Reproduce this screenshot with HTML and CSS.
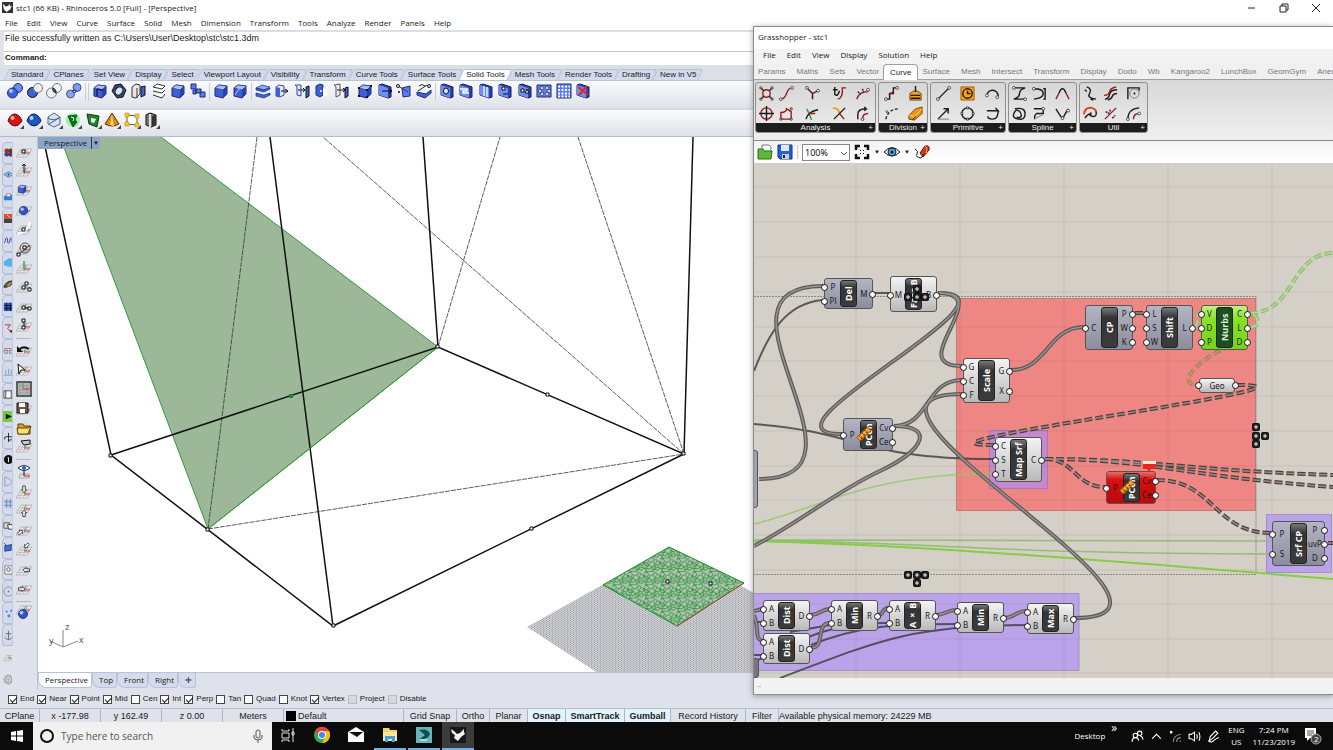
FILE: index.html
```html
<!DOCTYPE html>
<html lang="en">
<head>
    <meta charset="utf-8">
    <title>stc1 - Rhinoceros 5.0</title>
    <link rel="stylesheet" href="styles.css">
</head>
<body>
    <svg class="defs" aria-hidden="true">
        <symbol id="box" viewBox="0 0 16 16"><path d="M2 5l4-3 8 1v8l-4 4-8-2z" fill="#3d5fd0" stroke="#1d2d78"/><path d="M2 5l4-3 8 1-4 4z" fill="#a9c0ff" stroke="#1d2d78" stroke-width=".6"/><path d="M10 7v8l4-4V3z" fill="#2743a8"/></symbol>
        <symbol id="slab" viewBox="0 0 16 16"><path d="M2 2l3-1 9 3v10l-3 1-9-3z" fill="#2744b0" stroke="#14205c"/><path d="M2 2l9 3v10l-9-3z" fill="#6d8df2"/></symbol>
        <symbol id="plane" viewBox="0 0 16 16"><path d="M5 5h11l-5 8H0z" fill="#eceef0" stroke="#a4a6aa" stroke-width=".7"/><path d="M3.500 8H14M2 10.500h11M8 5l-5 8M12 5l-5 8" stroke="#a4a6aa" stroke-width=".6"/><path d="M8 9h6" stroke="#d33c32"/><path d="M8 9l2-4" stroke="#44a04a"/></symbol>
        <symbol id="ball" viewBox="0 0 16 16"><circle cx="8" cy="8" r="6" fill="#2f55c8" stroke="#14256e"/><circle cx="6" cy="6" r="2.500" fill="#a9c4ff"/></symbol>
        <symbol id="hand" viewBox="0 0 16 16"><path d="M8 2l4 4h-2v6H6V6H4z" fill="#fff" stroke="#111" stroke-width="1.200"/></symbol>
        <symbol id="nodekey" viewBox="0 0 8 8"><rect x=".5" y=".5" width="7" height="7" rx="1" fill="#222" stroke="#111"/><path d="M4 2v4M2 4h4" stroke="#eee"/></symbol>
        <symbol id="pipe" viewBox="0 0 18 18"><path d="M1 13L13 1l4 4L5 17z" fill="#f59a1c" stroke="#8a4a08"/><path d="M4 11l3 3M7 8l3 3M10 5l3 3" stroke="#7c3500" stroke-width="1.500"/><path d="M4 13L13 4" stroke="#ffe08a"/></symbol>
    </svg>

    <header class="titlebar">
        <svg class="logo" viewBox="0 0 12 12"><rect width="12" height="12" fill="#333"/><path d="M1 2l3 3 3-1 1-2 1 3 2-1-2 4-4 3-3-3z" fill="#fff"/></svg>
        <span>stc1 (66 KB) - Rhinoceros 5.0 [Full] - [Perspective]</span>
        <div class="window-buttons">
            <button aria-label="Minimize"><svg viewBox="0 0 10 10"><path d="M1 5h7"/></svg></button>
            <button aria-label="Restore"><svg viewBox="0 0 10 10"><path d="M1 3h6v6H1zM3 3V1h6v6H7"/></svg></button>
            <button aria-label="Close"><svg viewBox="0 0 10 10"><path d="M1 1l8 8M9 1l-8 8"/></svg></button>
        </div>
    </header>
    <nav class="menubar">
        <button>File</button><button>Edit</button><button>View</button><button>Curve</button><button>Surface</button><button>Solid</button><button>Mesh</button><button>Dimension</button><button>Transform</button><button>Tools</button><button>Analyze</button><button>Render</button><button>Panels</button><button>Help</button>
    </nav>
    <section class="command">
        <p>File successfully written as C:\Users\User\Desktop\stc\stc1.3dm</p>
        <div class="prompt"><label for="cmd">Command:</label><input id="cmd" type="text"></div>
    </section>
    <nav class="tooltabs">
        <button>Standard</button><button>CPlanes</button><button>Set View</button><button>Display</button><button>Select</button><button>Viewport Layout</button><button>Visibility</button><button>Transform</button><button>Curve Tools</button><button>Surface Tools</button><button class="active">Solid Tools</button><button>Mesh Tools</button><button>Render Tools</button><button>Drafting</button><button>New in V5</button>
    </nav>

    <div class="toolbar">
        <div class="set w4">
            <button aria-label="Boolean union"><svg viewBox="0 0 16 16"><circle cx="11" cy="5" r="4.500" fill="#6b8cf0" stroke="#1d2d78"/><circle cx="5.500" cy="10" r="5" fill="#3d62d8" stroke="#1d2d78"/><circle cx="4" cy="8" r="2" fill="#a9c0ff"/></svg></button>
            <button aria-label="Boolean difference"><svg viewBox="0 0 16 16"><circle cx="5.500" cy="9.500" r="5" fill="#3d62d8" stroke="#111"/><circle cx="11" cy="5" r="4.500" fill="#eef0f4" stroke="#777"/></svg></button>
            <button aria-label="Boolean intersection"><svg viewBox="0 0 16 16" fill="none" stroke="#777"><circle cx="5.500" cy="10" r="5"/><circle cx="11" cy="5" r="4.500"/><path d="M7 5q3 1 3 5-4-1-3-5z" fill="#3d62d8" stroke="#222"/></svg></button>
            <button aria-label="Boolean split"><svg viewBox="0 0 16 16"><circle cx="11" cy="4.500" r="4" fill="#7d9bf5" stroke="#33479c"/><circle cx="4.500" cy="11" r="4" fill="#86a2f7" stroke="#555"/><path d="M6 8l4-1-1 3z" fill="#fff" stroke="#1d2d78"/></svg></button>
        </div>
        <i></i><i></i>
        <div class="set w6">
            <button aria-label="Shell"><svg viewBox="0 0 16 16"><use href="#box"/><path d="M5 6v7M5 6l6 1" stroke="#14205c" stroke-width="1.500"/></svg></button>
            <button aria-label="Cap"><svg viewBox="0 0 16 16"><path d="M4 2l6-1 5 6-3 7-6 1-5-7z" fill="#3b4a80" stroke="#111"/><ellipse cx="8" cy="8" rx="3.500" ry="4.500" transform="rotate(35 8 8)" fill="#d9e2ff" stroke="#111"/></svg></button>
            <button aria-label="Extract surface"><svg viewBox="0 0 16 16"><path d="M1 4l4-3 4 1v9l-4 4-4-1z" fill="#e8e8e8" stroke="#333"/><path d="M6 5v10" stroke="#333"/><path d="M10 4l4-1v9l-4 2z" fill="#3d62d8" stroke="#111"/></svg></button>
            <button aria-label="Unroll"><svg viewBox="0 0 16 16"><path d="M2 4l9 2 3-3-8-2zM2 8l9 2 3-3M2 12l9 3 3-4" fill="#fff" stroke="#333"/></svg></button>
            <button aria-label="Box"><svg viewBox="0 0 16 16"><use href="#box"/></svg></button>
            <button aria-label="Edit edges"><svg viewBox="0 0 16 16" fill="#5b7cf0" stroke="#1d2d78"><path d="M1 1h5v5H1zM6 6h5v4H6zM10 9h5v5h-5zM3 7h3v4H3z"/></svg></button>
        </div>
        <i></i>
        <div class="set w2">
            <button aria-label="Fillet edge"><svg viewBox="0 0 16 16"><use href="#box"/></svg></button>
            <button aria-label="Chamfer edge"><svg viewBox="0 0 16 16"><use href="#box"/><path d="M3 12l4-6 6-2" stroke="#a9c0ff" fill="none"/></svg></button>
        </div>
        <i></i>
        <div class="set w5">
            <button aria-label="Wire cut"><svg viewBox="0 0 16 16"><path d="M1 5l6-3 8 2-6 3z" fill="#8fabff" stroke="#1d2d78" stroke-width=".7"/><path d="M1 10l8 2 6-2v2l-6 3-8-2zM1 5l8 2 6-2v1l-6 3-8-2z" fill="#3d62d8" stroke="#1d2d78" stroke-width=".7"/></svg></button>
            <button aria-label="Move face"><svg viewBox="0 0 16 16"><path d="M2 4l3-2 5 1v9l-4 2-4-1z" fill="#dfe6ff" stroke="#2d48b0"/><path d="M2 4v9l4 1V5z" fill="#3d62d8"/><path d="M7 8h7m-3-2l3 2-3 2" stroke="#111" fill="none"/></svg></button>
            <button aria-label="Move edge"><svg viewBox="0 0 16 16"><path d="M1 2h6v11l-4-1V4z" fill="#dfe6ff" stroke="#2d48b0"/><path d="M4 7h7m-2-2l2 2-2 2" stroke="#111" fill="none"/><path d="M12 4l3-1v10l-3 2z" fill="#3d62d8" stroke="#111"/></svg></button>
            <button aria-label="Split face"><svg viewBox="0 0 16 16"><path d="M2 3l4-2 3 1v10l-3 2-4-2z" fill="#3d62d8" stroke="#1d2d78"/><path d="M9 5l5 1v7l-5 1" fill="#fff" stroke="#eee"/><circle cx="7" cy="8" r="1" fill="#fff"/></svg></button>
            <button aria-label="Fold face"><svg viewBox="0 0 16 16"><path d="M1 2l6-1v11l-4 2V4z" fill="#eef" stroke="#555"/><path d="M4 7h8m-2-2l2 2-2 2" stroke="#111" fill="none"/><path d="M12 5l3-1v9l-3 2z" fill="#3d62d8" stroke="#111"/></svg></button>
        </div>
        <div class="set w4">
            <button aria-label="Solid points on"><svg viewBox="0 0 16 16"><use href="#box"/><path d="M1 4h2v2H1zM13 2h2v2h-2zM9 6h2v2H9zM1 12h2v2H1zM9 13h2v2H9z" fill="#111"/></svg></button>
            <button aria-label="Extrude face"><svg viewBox="0 0 16 16"><use href="#slab"/><path d="M5 8h10m-3-2l3 2-3 2" stroke="#111" fill="none"/></svg></button>
            <button aria-label="Taper"><svg viewBox="0 0 16 16"><path d="M6 5l8-2v10l-7 1z" fill="#5b7cf0" stroke="#1d2d78"/><path d="M2 3l10 6" stroke="#333"/><circle cx="2" cy="3" r="1.500" fill="#fff" stroke="#111"/><circle cx="3" cy="9" r="1" fill="#111"/></svg></button>
            <button aria-label="Rotate face"><svg viewBox="0 0 16 16"><path d="M1 9l9 2 5-4v3l-6 5-8-3z" fill="#3d62d8" stroke="#1d2d78"/><path d="M2 8l9-6M3 3q3-3 6 0" stroke="#222" fill="none"/><circle cx="13" cy="3" r="1.500" fill="#fff" stroke="#111"/></svg></button>
        </div>
        <i></i>
        <div class="set w8">
            <button aria-label="Round hole"><svg viewBox="0 0 16 16"><use href="#slab"/><ellipse cx="7" cy="8" rx="2.500" ry="3" fill="#dfe6ff" stroke="#111"/></svg></button>
            <button aria-label="Make hole"><svg viewBox="0 0 16 16"><use href="#slab"/><path d="M2 6h7v2H5v2h6" stroke="#fff" stroke-width="1.500" fill="none"/></svg></button>
            <button aria-label="Revolve hole"><svg viewBox="0 0 16 16"><use href="#slab"/><path d="M6 3v10M9 4v10" stroke="#e6ecff" stroke-width="1.500"/></svg></button>
            <button aria-label="Move hole"><svg viewBox="0 0 16 16"><use href="#slab"/><path d="M5 4h3v3H5zM6 11h5" stroke="#111" fill="#fff"/></svg></button>
            <button aria-label="Rotate hole"><svg viewBox="0 0 16 16"><use href="#slab"/><path d="M4 6h3v3H4zM8 10l2-4 2 4z" stroke="#111" fill="#fff"/></svg></button>
            <button aria-label="Array hole polar"><svg viewBox="0 0 16 16"><path d="M1 2h14v12H1z" fill="#5b7cf0" stroke="#1d2d78"/><g fill="#fff" stroke="#222" stroke-width=".6"><circle cx="6" cy="5" r="1.500"/><circle cx="11" cy="5" r="1.500"/><circle cx="4" cy="8" r="1.500"/><circle cx="13" cy="8" r="1.500"/><circle cx="6" cy="11" r="1.500"/><circle cx="11" cy="11" r="1.500"/></g></svg></button>
            <button aria-label="Array hole"><svg viewBox="0 0 16 16"><path d="M1 1h14v14H1z" fill="#5b7cf0" stroke="#1d2d78"/><path d="M2 3.500h12M2 7h12M2 10.500h12M2 13.500h12" stroke="#fff" stroke-width="2" stroke-dasharray="2 1.500"/></svg></button>
            <button aria-label="Delete hole"><svg viewBox="0 0 16 16"><use href="#slab"/><path d="M3 4l10 8M12 3L4 12" stroke="#e1261c" stroke-width="2"/></svg></button>
        </div>
    </div>
    <div class="toolbar second">
        <div class="set w8">
            <button class="fly" aria-label="Render"><svg viewBox="0 0 16 16"><path d="M1 9q2-7 7-7 5 1 7 7-3 5-7 5T1 9z" fill="#d91414" stroke="#5c0505"/><circle cx="5.500" cy="6" r="2" fill="#ffb0a8"/></svg></button>
            <button class="fly" aria-label="Shade"><svg viewBox="0 0 16 16"><path d="M1 9q2-7 7-7 5 1 7 7-3 5-7 5T1 9z" fill="#1c56c8" stroke="#071a4c"/><circle cx="5.500" cy="6" r="2" fill="#b4d2ff"/></svg></button>
            <button class="fly" aria-label="Wireframe"><svg viewBox="0 0 16 16" fill="#d8e2f0" stroke="#4a6484"><path d="M8 1l6 4v7l-6 3-6-3V5z"/><path d="M2 6q6 4 12-1M3 12l10-6" fill="none"/></svg></button>
            <button class="fly" aria-label="Zebra"><svg viewBox="0 0 16 16"><circle cx="8" cy="8" r="7" fill="#9df0a0"/><path d="M3 4l9-1-2 5 2 2-4 5-2-4z" fill="#146a20" stroke="#062"/><path d="M6 5l3 1-1 3" stroke="#fff" fill="none"/></svg></button>
            <button class="fly" aria-label="Curvature"><svg viewBox="0 0 16 16"><path d="M2 2l12 2-2 11-8-3z" fill="#1c8a2c" stroke="#0b3b12"/><path d="M6 6l5 1-2 4-3-1z" fill="#fff"/></svg></button>
            <button class="fly" aria-label="Cone"><svg viewBox="0 0 16 16"><path d="M8 1l7 11q-7 4-14 0z" fill="#d98a14" stroke="#5c3304"/><path d="M8 2L6 13l4 1z" fill="#ffd27a"/></svg></button>
            <button class="fly" aria-label="Points"><svg viewBox="0 0 16 16"><path d="M3 3l10 1v9L3 12z" fill="#fff" stroke="#555"/><path d="M1 1h4v4H1zM11 2h4v4h-4zM1 10h4v4H1zM11 11h4v4h-4z" fill="#f5cc1d" stroke="#b08800" stroke-width=".5"/></svg></button>
            <button class="fly" aria-label="Clipping"><svg viewBox="0 0 16 16"><path d="M3 3l4-2 6 2v10l-5 2-5-2z" fill="#777" stroke="#111"/><path d="M7 2v13" stroke="#dfe9df" stroke-width="2"/><path d="M9 4v10l4-2V3z" fill="#333"/></svg></button>
        </div>
    </div>

    <main class="workspace">
        <aside class="sidebar">
            <div class="sidetabs">
                <button aria-label="Standard"><svg viewBox="0 0 12 12"><circle cx="4" cy="4" r="2.500" fill="#b22"/><circle cx="8" cy="4" r="2.500" fill="#444"/><circle cx="4" cy="8" r="2.500" fill="#264ba0"/><circle cx="8" cy="8" r="2.500" fill="#733"/></svg></button>
                <button aria-label="CPlanes"><svg viewBox="0 0 12 12"><path d="M1 6l5-3 5 3-5 3z" fill="#9cc2ec" stroke="#4a7cb4"/><circle cx="6" cy="6" r="1" fill="#146"/></svg></button>
                <button aria-label="Set view"><svg viewBox="0 0 12 12"><path d="M1 6l3-2h7v6H1z" fill="#2f7be0"/><path d="M4 3h4v3H4z" fill="#fff" stroke="#888"/></svg></button>
                <button aria-label="Display"><svg viewBox="0 0 12 12"><path d="M1 1h10v5H1z" fill="#e8481c"/><path d="M1 6h10v5H1z" fill="#444"/><path d="M4 2l4 3" stroke="#fff"/></svg></button>
                <button aria-label="Curves"><svg viewBox="0 0 12 12"><path d="M1 9c2 0 1-6 3-6s0 6 2 6 1-6 3-6 0 6 2 6" stroke="#1c3e90" fill="none"/></svg></button>
                <button aria-label="Surface"><svg viewBox="0 0 12 12"><path d="M1 5l6-4 5 2v7l-6 1-5-2z" fill="#54b4ea"/></svg></button>
                <button aria-label="Leaf"><svg viewBox="0 0 12 12"><path d="M1 9Q3 2 11 2 10 9 1 9z" fill="#3b7a48" stroke="#222"/><path d="M5 8l4-4" stroke="#f08020" stroke-width="2"/></svg></button>
                <button aria-label="Array"><svg viewBox="0 0 12 12"><path d="M1 2h10v9H1z" fill="#2b5bd8"/><path d="M1 5h10M1 8h10M4 2v9M8 2v9" stroke="#111"/></svg></button>
                <button aria-label="Points"><svg viewBox="0 0 12 12"><path d="M2 2h6L5 6l4 4" stroke="#a33" fill="none"/><circle cx="9" cy="9" r="1.500" fill="#533"/></svg></button>
                <button aria-label="Section"><svg viewBox="0 0 12 12"><path d="M1 4h10M1 6h4v3H2zM7 6h4v3H7z" stroke="#977" fill="none"/></svg></button>
                <button aria-label="Lights"><svg viewBox="0 0 12 12"><path d="M1 9h10M3 3v5M6 2v6M9 3v5" stroke="#7a9ad8" fill="none"/></svg></button>
                <button aria-label="Film"><svg viewBox="0 0 12 12"><path d="M1 2h10v8H1z" fill="#fff" stroke="#444"/><path d="M3 2v8M9 2v8" stroke="#444"/></svg></button>
                <button aria-label="Play"><svg viewBox="0 0 12 12"><rect width="12" height="12" fill="#7cc83c"/><path d="M3 3l7 3-7 3z" fill="#111"/></svg></button>
                <button aria-label="Rotate"><svg viewBox="0 0 12 12"><path d="M6 1v10M2 8Q0 5 6 5t5 2-5 2" stroke="#222" fill="none"/></svg></button>
                <button aria-label="Info"><svg viewBox="0 0 12 12"><circle cx="6" cy="6" r="5" fill="#111"/><path d="M5 4h1v5" stroke="#fff" fill="none"/></svg></button>
                <button aria-label="Arc"><svg viewBox="0 0 12 12"><path d="M2 1v10M2 1q8 3 8 6-3 4-8 4" stroke="#8aa0c8" fill="none"/></svg></button>
                <button aria-label="Grid"><svg viewBox="0 0 12 12"><path d="M1 1h10v10H1z" fill="#c6d2e8"/><path d="M1 4h10M1 8h10M4 1v10M8 1v10" stroke="#6d86b8"/></svg></button>
                <button aria-label="Sheets"><svg viewBox="0 0 12 12"><path d="M1 3h6v6H1z" fill="#ddd" stroke="#555"/><path d="M5 5h5l1 5H6z" fill="#fff" stroke="#333"/></svg></button>
                <button aria-label="Cage"><svg viewBox="0 0 12 12"><path d="M2 4l7-1v6l-7 1z" fill="#3f6cd8" stroke="#24418c"/><path d="M1 1l3 3M11 1L8 4" stroke="#555"/></svg></button>
                <button aria-label="Lock"><svg viewBox="0 0 12 12"><path d="M2 2h8v9H2z" fill="#f6f6f6" stroke="#777"/><circle cx="6" cy="6" r="2" fill="none" stroke="#555"/></svg></button>
                <button aria-label="Circle"><svg viewBox="0 0 12 12"><circle cx="6" cy="6" r="5" fill="none" stroke="#8090a8"/><circle cx="6" cy="6" r="1" fill="#678"/></svg></button>
                <button aria-label="Cloud"><svg viewBox="0 0 12 12"><path d="M3 3h2v2H3zM8 2h2v2H8zM5 7h3v3H5z" fill="#4f7ee8"/></svg></button>
                <button aria-label="Anchor"><svg viewBox="0 0 12 12"><path d="M6 1v9M3 4h6M2 8q4 5 8 0" stroke="#667" fill="none"/></svg></button>
                <button aria-label="Plane" class="active"><svg viewBox="0 0 16 16"><use href="#plane"/></svg></button>
                <button aria-label="Settings" class="gear"><svg viewBox="0 0 12 12" fill="none" stroke="#888"><circle cx="6" cy="6" r="5" stroke-dasharray="2 1"/><circle cx="6" cy="6" r="3.500"/><circle cx="6" cy="6" r="1"/></svg></button>
            </div>
            <div class="sidetools">
                <div class="stack s10">
                    <button aria-label="Set origin"><svg viewBox="0 0 16 16"><use href="#plane"/><path d="M6 6h3v3H6z" fill="#fff" stroke="#111"/></svg></button>
                    <button aria-label="Elevation"><svg viewBox="0 0 16 16"><use href="#plane"/><path d="M8 10V1M6 3l2-2 2 2" stroke="#111" fill="none"/></svg></button>
                    <button aria-label="To object"><svg viewBox="0 0 16 16"><use href="#plane"/><use href="#box" x="1" y="1" width="10" height="12"/></svg></button>
                    <button aria-label="To surface"><svg viewBox="0 0 16 16"><use href="#plane"/><use href="#ball" x="2" y="3" width="11" height="11"/></svg></button>
                    <button aria-label="To curve"><svg viewBox="0 0 16 16"><use href="#plane"/><path d="M1 13Q12 12 14 1" stroke="#fff" stroke-width="2" fill="none"/><path d="M6 7h3v3H6z" fill="#fff" stroke="#111"/></svg></button>
                    <button aria-label="Rotate"><svg viewBox="0 0 16 16"><use href="#plane"/><path d="M2 14L14 4" stroke="#222"/><circle cx="9" cy="7" r="5" fill="none" stroke="#555"/><path d="M7 5h3v3H7zM1 12h3v3H1z" fill="#fff" stroke="#111"/></svg></button>
                    <button aria-label="Vertical"><svg viewBox="0 0 16 16"><use href="#plane"/><path d="M8 10V1" stroke="#47a84b" stroke-width="1.500"/></svg></button>
                    <button aria-label="Three points"><svg viewBox="0 0 16 16"><use href="#plane"/><path d="M6 7h3v3H6zM9 3h3v3H9zM12 9h3v3h-3z" fill="#fff" stroke="#111"/></svg></button>
                    <button aria-label="X axis"><svg viewBox="0 0 16 16"><use href="#plane"/><path d="M9 9h4" stroke="#111"/><path d="M6 7h3v3H6zM12 8h3v3h-3z" fill="#fff" stroke="#111"/></svg></button>
                    <button aria-label="Z axis"><svg viewBox="0 0 16 16"><use href="#plane"/><path d="M8 9V3" stroke="#111"/><path d="M6 8h3v3H6zM6 1h3v3H6z" fill="#fff" stroke="#111"/></svg></button>
                </div>
                <hr>
                <div class="stack s6">
                    <button aria-label="Previous"><svg viewBox="0 0 16 16"><use href="#plane"/><path d="M3 7q4-5 10-1" stroke="#111" stroke-width="2" fill="none"/><path d="M1 3v6h6z" fill="#111"/></svg></button>
                    <button aria-label="Select"><svg viewBox="0 0 16 16"><use href="#plane"/><path d="M2 2l7 6H5l-2 4z" fill="#fff" stroke="#111"/></svg></button>
                    <button aria-label="World top"><svg viewBox="0 0 16 16"><path d="M1 1h14v14H1z" fill="#b6b8ba" stroke="#333" stroke-width="1.500"/><path d="M1 5h14M1 9h14M1 12h14M4 1v14M11 1v14" stroke="#8f9193" stroke-width=".6"/><path d="M7 1v7" stroke="#3f9e48"/><path d="M7 8h8" stroke="#c83c32"/></svg></button>
                    <button aria-label="Save plane"><svg viewBox="0 0 16 16"><use href="#plane"/><path d="M1 2h11v10H1z" fill="#6b5a40" stroke="#111"/><path d="M3 2h6v4H3zM4 8h5v4H4z" fill="#fff"/></svg></button>
                    <button aria-label="Open plane"><svg viewBox="0 0 16 16"><path d="M2 4h5l1 2h6v8H2z" fill="#d8a020" stroke="#604000"/><path d="M1 8h11l3-2-3 8H2z" fill="#ffe07a" stroke="#604000"/><path d="M7 1h6v4H8z" fill="#ddd"/></svg></button>
                    <button aria-label="Link plane"><svg viewBox="0 0 16 16"><use href="#plane"/><path d="M5 2l9-1v4l-6 1z" fill="#ccc" stroke="#111"/></svg></button>
                </div>
                <hr>
                <div class="stack s7">
                    <button aria-label="View plane"><svg viewBox="0 0 16 16"><path d="M4 10h9v4H3z" fill="#ddd" stroke="#aaa"/><path d="M2 4q6-5 12 0-6 5-12 0z" fill="#fff" stroke="#234"/><circle cx="8" cy="4" r="2" fill="#2d5cc8"/><path d="M8 7v5" stroke="#111"/><path d="M8 12h6" stroke="#c33"/></svg></button>
                    <button aria-label="Top"><svg viewBox="0 0 16 16"><use href="#plane" y="2"/><use href="#hand" x="3" y="-1" width="10" height="11" transform="rotate(180 8 5)"/></svg></button>
                    <button aria-label="Bottom"><svg viewBox="0 0 16 16"><use href="#plane" y="-3"/><use href="#hand" x="3" y="6" width="10" height="10"/></svg></button>
                    <button aria-label="Left"><svg viewBox="0 0 16 16"><use href="#plane"/><use href="#hand" x="0" y="6" width="9" height="9" transform="rotate(45 4 10)"/></svg></button>
                    <button aria-label="Back"><svg viewBox="0 0 16 16"><use href="#plane"/><use href="#hand" x="7" y="0" width="9" height="9" transform="rotate(225 11 4)"/></svg></button>
                    <button aria-label="Right"><svg viewBox="0 0 16 16"><use href="#plane"/><use href="#hand" x="6" y="3" width="10" height="10" transform="rotate(-90 11 8)"/></svg></button>
                    <button aria-label="Front"><svg viewBox="0 0 16 16"><use href="#plane"/><use href="#hand" x="0" y="3" width="10" height="10" transform="rotate(90 5 8)"/></svg></button>
                </div>
                <hr>
                <div class="stack"><button aria-label="Named planes"><svg viewBox="0 0 16 16"><use href="#plane" y="-3"/><use href="#ball" x="1" y="4" width="12" height="12"/></svg></button></div>
            </div>
        </aside>
        <section class="views">
            <div class="viewport">
                <svg class="scene" viewBox="38 137 1295 536" preserveAspectRatio="xMinYMin slice">
                    <defs>
                        <pattern id="dots" width="3" height="2" patternUnits="userSpaceOnUse"><rect width="3" height="2" fill="#d0d2d5"/><path d="M0 .5h1M1.500 1.500h1" stroke="#8c8f94" stroke-width=".8"/></pattern>
                        <pattern id="cells" width="23" height="19" patternUnits="userSpaceOnUse" patternTransform="scale(.7)"><rect width="23" height="19" fill="#b9bfba"/><path d="M0 2l4-2 3 4-4 3-3-3 2 7 5-2 2-4 5-1 1-5 4 4-3 5 5 2 2-5-4-2M7 9l4 3 5-2-2-4M4 7l3 2-4 5 5 1 3-3 2 5-5 2-5-1M16 10l-1 5 5 2 3-4-4-1-4 3-2 2 1 2M0 14l3 0-1 5" fill="none" stroke="#1d9a2a" stroke-width="1.300"/></pattern>
                    </defs>
                    <path d="M60 137H161L438 347 208 529z" fill="#9cb899"/>
                    <path d="M60 137L208 529 438 347 161 137" fill="none" stroke="#2f9a3a"/>
                    <g stroke="#333" stroke-width=".8" stroke-dasharray="5 1">
                        <path d="M208 529L257 137M438 347L500 137M684 454L578 137M684 454L323 137M208 529L684 454"/>
                    </g>
                    <path d="M43 137L111 455 333 626 684 454 438 347 111 455M438 347L423 137M684 454L693 137M333 626L270 137" fill="none" stroke="#111" stroke-width="1.500"/>
                    <path d="M208 529L438 347" stroke="#2f9a3a"/>
                    <path d="M527 627L670 547 900 673H598z" fill="url(#dots)"/>
                    <path d="M603 585L669 547 744 583 677 626z" fill="url(#cells)" stroke="#1c8f28"/>
                    <path d="M677 626L744 583" stroke="#b8403a"/>
                    <g fill="#fff" stroke="#111"><path d="M109 454h3v3h-3zM206 528h3v3h-3zM332 624h3v3h-3zM682 452h3v3h-3zM436 345h3v3h-3zM546 393h3v3h-3zM530 527h3v3h-3zM666 580h3v3h-3zM709 582h3v3h-3z"/></g>
                    <path d="M289 394h4v4h-4z" fill="#238030"/>
                    <path d="M63 630v17l15-6M63 647l-13-6" fill="none" stroke="#888"/>
                    <g class="axis"><text x="65" y="630">z</text><text x="49" y="644">y</text><text x="79" y="643">x</text></g>
                </svg>
                <button class="viewname">Perspective<span>▼</span></button>
            </div>
            <nav class="viewtabs">
                <button class="active">Perspective</button><button>Top</button><button>Front</button><button>Right</button><button>✛</button>
            </nav>
        </section>
    </main>

    <form class="osnap">
        <label><input type="checkbox" checked>End</label>
        <label><input type="checkbox" checked>Near</label>
        <label><input type="checkbox" checked>Point</label>
        <label><input type="checkbox" checked>Mid</label>
        <label><input type="checkbox">Cen</label>
        <label><input type="checkbox" checked>Int</label>
        <label><input type="checkbox" checked>Perp</label>
        <label><input type="checkbox">Tan</label>
        <label><input type="checkbox">Quad</label>
        <label><input type="checkbox">Knot</label>
        <label><input type="checkbox" checked>Vertex</label>
        <label><input type="checkbox" disabled>Project</label>
        <label><input type="checkbox" disabled>Disable</label>
    </form>
    <footer class="status">
        <span class="cplane">CPlane</span><span class="coord">x -177.98</span><span class="coord">y 162.49</span><span class="coord">z 0.00</span><span class="coord">Meters</span>
        <span class="layer"><b></b>Default</span>
        <button class="gridsnap">Grid Snap</button><button class="ortho">Ortho</button><button class="planar">Planar</button><button class="planar on">Osnap</button><button class="smart on">SmartTrack</button><button class="gumball on">Gumball</button><button class="record">Record History</button><button class="ortho">Filter</button>
        <span class="memory">Available physical memory: 24229 MB</span>
    </footer>

    <footer class="taskbar">
        <button class="start" aria-label="Start"><svg viewBox="0 0 12 12"><path d="M0 2l5-1v4.500H0zM6 1l6-1v5.500H6zM0 6.500h5V11l-5-1zM6 6.500h6V12l-6-1z" fill="#fff"/></svg></button>
        <label class="search">
            <svg viewBox="0 0 14 14"><circle cx="7" cy="7" r="6" fill="none" stroke="#111" stroke-width="2"/></svg>
            <input type="text" placeholder="Type here to search">
            <svg viewBox="0 0 14 14" fill="none" stroke="#555"><rect x="5" y="1" width="4" height="8" rx="2"/><path d="M3 6v2q0 3 4 3t4-3V6M7 11v3"/></svg>
        </label>
        <div class="apps">
            <button aria-label="Task view"><svg viewBox="0 0 16 16" fill="none" stroke="#ddd"><path d="M2 2v2h7V2M2 6h7v5H2zM2 15v-2h7v2M13 1v14M12 5h2v3h-2z"/></svg></button>
            <button aria-label="Chrome"><svg viewBox="0 0 16 16"><circle cx="8" cy="8" r="8" fill="#34a853"/><path d="M1 4a8 8 0 0 1 14 0H8L5 9z" fill="#ea4335"/><path d="M15 4a8 8 0 0 1-7 12l4-7-1-5z" fill="#fbbc05"/><circle cx="8" cy="8" r="4" fill="#fff"/><circle cx="8" cy="8" r="3" fill="#4285f4"/></svg></button>
            <button aria-label="Mail"><svg viewBox="0 0 16 16"><path d="M0 5l8-5 8 5v10H0z" fill="#fff"/><path d="M1 5h14l-6 5z" fill="#111"/></svg></button>
            <button class="open" aria-label="Explorer"><svg viewBox="0 0 16 16"><path d="M1 1h6l1 2h7v11H1z" fill="#f8d36a"/><path d="M1 5h14v9H1z" fill="#ffe596"/><path d="M3 15V9h10v6h-3v-3H6v3z" fill="#38a0e4"/></svg></button>
            <button class="open" aria-label="3ds Max"><svg viewBox="0 0 16 16"><rect width="16" height="16" fill="#68b4b8"/><path d="M3 3q9-2 11 4-2 6-10 5l5-4z" fill="#114b58"/><path d="M4 13h7" stroke="#fff"/></svg></button>
            <button class="open current" aria-label="Rhinoceros"><svg viewBox="0 0 16 16"><rect width="16" height="16" fill="#181818"/><path d="M1 2l3 2 3 3 3-1 4-4v3l1 2-4 3-3 4-4-3 1-3-3-2z" fill="#f4f4f4"/></svg></button>
        </div>
        <div class="tray">
            <span>Desktop</span><span class="more">»</span>
            <svg viewBox="0 0 12 12"><circle cx="4" cy="5" r="2"/><path d="M1 11q0-4 3-4t3 3"/><circle cx="8" cy="3" r="2"/><path d="M8 5q3 1 3 4"/></svg>
            <svg viewBox="0 0 12 12"><path d="M2 8l4-4 4 4"/></svg>
            <svg viewBox="0 0 12 12"><path d="M1 1l2 2M3 1L1 3"/><path d="M4 11q0-6 7-7M7 11q0-4 4-4M10 11l1-1" stroke="#888"/></svg>
            <svg viewBox="0 0 12 12"><path d="M1 4h2l3-2v8L3 8H1zM8 4q1 2 0 4M10 2q2 4 0 8"/></svg>
            <svg viewBox="0 0 12 12"><path d="M2 10l1-4 5-5 2 2-5 5zM1 10q3 2 5 0t5-3"/></svg>
            <span class="lang">ENG<br>US</span>
            <span class="clock">7:24 PM<br>11/23/2019</span>
            <svg class="notes" viewBox="0 0 18 18"><path d="M1 1h11v10H6l-3 3v-3H1z" fill="#fff" stroke="none"/><path d="M3 4h7M3 6h7M3 8h5" stroke="#222" stroke-width=".8"/><circle cx="12" cy="12" r="5" fill="#444" stroke="#aaa"/><text x="10" y="15">2</text></svg>
        </div>
    </footer>

    <section class="gh">
        <header class="gh-title">Grasshopper - stc1</header>
        <nav class="gh-menu"><button>File</button><button>Edit</button><button>View</button><button>Display</button><button>Solution</button><button>Help</button></nav>
        <nav class="gh-tabs"><button>Params</button><button>Maths</button><button>Sets</button><button>Vector</button><button class="active">Curve</button><button>Surface</button><button>Mesh</button><button>Intersect</button><button>Transform</button><button>Display</button><button>Dodo</button><button>Wb</button><button>Kangaroo2</button><button>LunchBox</button><button>GeomGym</button><button>Anem</button></nav>
        <div class="ribbon">
            <section class="panel analysis">
                <div class="icons">
                    <svg viewBox="0 0 16 16"><circle class="r" cx="8" cy="8" r="4"/><path class="k" d="M2 2l3 3M14 2l-3 3M2 14l3-3M14 14l-3-3"/><path class="p" d="M1 1h2v2H1zM13 1h2v2h-2zM1 13h2v2H1zM13 13h2v2h-2z"/></svg>
                    <svg viewBox="0 0 16 16"><path class="r" d="M2 14c8 0 4-12 12-12"/><circle class="p" cx="2" cy="14" r="1.500"/><circle class="p" cx="14" cy="2" r="1.500"/></svg>
                    <svg viewBox="0 0 16 16"><path class="k" d="M2 2l6 6v6"/><path class="r" d="M8 8l6-3"/><circle class="p" cx="2" cy="2" r="1.500"/><circle class="p" cx="14" cy="5" r="1.500"/></svg>
                    <svg viewBox="0 0 16 16"><path class="k" d="M3 1v8q3 3 5-4M1 4h5"/><path class="r" d="M6 14q6-1 5-12h4"/></svg>
                    <svg viewBox="0 0 16 16"><path class="r" d="M2 14q2-8 12-8"/><path class="k" d="M3 6l3 3M8 3l1 4" stroke-dasharray="2 1"/><circle class="p" cx="14" cy="4" r="1.500"/></svg>
                    <svg viewBox="0 0 16 16"><circle class="r" cx="8" cy="8" r="6"/><path class="k" d="M8 0v16M0 8h16"/></svg>
                    <svg viewBox="0 0 16 16"><path class="r" d="M2 14V7q6 0 6-4l5 3v8z"/><path class="p" d="M1 13h2v2H1zM12 13h2v2h-2zM12 2h2v2h-2z"/></svg>
                    <svg viewBox="0 0 16 16"><path d="M2 3q3 6 5 12" fill="none" stroke="#2f9a3a" stroke-width="1.500"/><path class="k" d="M1 14q2-8 13-10"/><path class="r" d="M5 8h6"/></svg>
                    <svg viewBox="0 0 16 16"><path d="M1 2q6 0 7 6" fill="none" stroke="#e8a010" stroke-width="2"/><path class="k" d="M2 14L14 2"/><path class="r" d="M8 8l5 6"/></svg>
                    <svg viewBox="0 0 16 16"><path class="k" d="M3 14V9q0-6 9-6l-2-2M12 3l-2 2"/><path class="r" d="M8 14q0-6 6-6"/><circle class="p" cx="8" cy="14" r="1.500"/></svg>
                </div>
                <h2>Analysis<span>+</span></h2>
            </section>
            <section class="panel division">
                <div class="icons">
                    <svg viewBox="0 0 16 16"><path class="k" d="M2 14h4V8h4V2h4"/><path class="r" d="M5 10l5-4"/><circle class="p" cx="2" cy="14" r="1.500"/><circle class="p" cx="14" cy="2" r="1.500"/></svg>
                    <svg viewBox="0 0 16 16"><path d="M2 8q6-6 12 0v7H2z" fill="#f5a31c" stroke="#7a4300"/><path class="k" d="M8 0v6M3 10h10M3 13h10"/></svg>
                    <svg viewBox="0 0 16 16"><path class="k" d="M2 14q2-10 13-11" stroke-dasharray="3 2"/><circle class="p" cx="3" cy="6" r="1"/></svg>
                    <svg viewBox="0 0 16 16"><path d="M1 10l7-7 7-2v7l-8 7-6-1z" fill="#ef9417" stroke="#7a4300"/><path d="M1 10l6 1 8-8" fill="none" stroke="#ffd27a"/><path d="M8 11l-3 4" stroke="#222"/></svg>
                </div>
                <h2>Division<span>+</span></h2>
            </section>
            <section class="panel primitive">
                <div class="icons">
                    <svg viewBox="0 0 16 16"><path class="k" d="M2 14L14 2"/><circle class="p" cx="2" cy="14" r="1.500"/><circle class="p" cx="14" cy="2" r="1.500"/></svg>
                    <svg viewBox="0 0 16 16"><path d="M1 1h14v14H1z" fill="#f5a31c" stroke="#a55a00"/><circle class="k" cx="8" cy="8" r="5"/><path class="k" d="M8 5v3h3"/></svg>
                    <svg viewBox="0 0 16 16"><path class="k" d="M2 10a6 6 0 1 1 12 1"/><circle class="p" cx="2" cy="10" r="1.500"/><circle class="p" cx="13" cy="12" r="1.500"/></svg>
                    <svg viewBox="0 0 16 16"><path class="k" d="M2 14L12 4M8 3h5v5"/><path class="g" d="M2 14h12"/></svg>
                    <svg viewBox="0 0 16 16"><circle class="k" cx="8" cy="8" r="6"/><path class="p" d="M1 7h2v2H1zM13 7h2v2h-2zM7 1h2v2H7zM7 13h2v2H7z"/></svg>
                    <svg viewBox="0 0 16 16"><path class="k" d="M2 5h12l-3-3M14 5q0 9-6 9-5 0-5-3"/></svg>
                </div>
                <h2>Primitive<span>+</span></h2>
            </section>
            <section class="panel spline">
                <div class="icons">
                    <svg viewBox="0 0 16 16"><path class="k" d="M2 2h12q-6 2-6 6t-6 6h12"/><circle class="p" cx="2" cy="2" r="1.500"/><circle class="p" cx="14" cy="14" r="1.500"/></svg>
                    <svg viewBox="0 0 16 16"><path class="k" d="M2 3q10 0 10 5t-10 6M12 3h2v11h-2"/><circle class="p" cx="2" cy="3" r="1.500"/></svg>
                    <svg viewBox="0 0 16 16"><path class="k" d="M4 8q4-10 8 0"/><path class="r" d="M1 14l3-6M15 14l-3-6"/></svg>
                    <svg viewBox="0 0 16 16"><path class="k" d="M3 3q11-2 11 5t-7 6-5-6 5-3 3 5-5 2"/></svg>
                    <svg viewBox="0 0 16 16"><path class="k" d="M2 3h10v5H5q-3 2-2 6"/><path class="g" d="M2 14l10-5"/><circle class="p" cx="12" cy="3" r="1.500"/></svg>
                    <svg viewBox="0 0 16 16"><path class="k" d="M1 3l5 8q3 3 4-1l4-7"/><circle class="p" cx="8" cy="13" r="1.500"/><circle class="p" cx="14" cy="5" r="1.500"/></svg>
                </div>
                <h2>Spline<span>+</span></h2>
            </section>
            <section class="panel util">
                <div class="icons">
                    <svg viewBox="0 0 16 16"><path class="k" d="M4 1q6 2 3 7t7 6M2 4l2 2M8 14l3 1"/></svg>
                    <svg viewBox="0 0 16 16"><path class="k" d="M2 14q4 0 5-5t8-5M5 15q4-1 5-4t5-3"/><path class="r" d="M1 10q5 0 6-4t7-5"/></svg>
                    <svg viewBox="0 0 16 16"><path class="k" d="M2 14V2h12v3M2 2h12"/><circle class="g" cx="9" cy="8" r="5"/><circle cx="9" cy="8" r="1"/></svg>
                    <svg viewBox="0 0 16 16"><path d="M1 9q1-8 8-7 5 1 5 5" fill="none" stroke="#d0451c" stroke-width="2"/><path class="k" d="M14 6q1 6-4 5t-1-4M2 13q4-6 7-4"/></svg>
                    <svg viewBox="0 0 16 16"><path class="r" d="M2 14L14 2"/><path class="k" d="M3 6l3 2 2-4M10 13l3-3" stroke-dasharray="2 1"/></svg>
                    <svg viewBox="0 0 16 16"><path class="k" d="M2 14Q2 3 14 2"/><path class="r" d="M8 14q0-6 6-6"/><circle class="p" cx="2" cy="14" r="1.500"/><circle class="p" cx="14" cy="8" r="1.500"/></svg>
                </div>
                <h2>Util<span>+</span></h2>
            </section>
        </div>
        <div class="gh-toolbar">
            <button aria-label="Open"><svg viewBox="0 0 16 16"><path d="M5 1h7l2 2v6H5z" fill="#fff" stroke="#777"/><path d="M1 5h5l1 2h8l-1 8H1z" fill="#5cb83a" stroke="#2c7014"/></svg></button>
            <button aria-label="Save"><svg viewBox="0 0 16 16"><path d="M1 1h14v14H3l-2-2z" fill="#2462d8" stroke="#0f2f80"/><path d="M4 1h8v6H4z" fill="#dfe9ff"/><path d="M5 10h7v5H5z" fill="#c9ced8"/><path d="M6 11h2v3H6z" fill="#223"/></svg></button>
            <i></i>
            <div class="zoom"><select aria-label="Zoom"><option>100%</option></select><svg viewBox="0 0 8 8"><path d="M1 3l3 3 3-3" fill="none" stroke="#555"/></svg></div>
            <button aria-label="Zoom extents"><svg viewBox="0 0 16 16"><path d="M2 6V2h4M10 2h4v4M14 10v4h-4M6 14H2v-4" fill="none" stroke="#111" stroke-width="2.500"/><path d="M6 6l1 1M10 6L9 7M6 10l1-1M10 10L9 9" stroke="#111"/></svg></button>
            <span>▼</span>
            <button aria-label="Preview"><svg viewBox="0 0 16 16"><path d="M0 8q8-9 16 0-8 8-16 0z" fill="#eaf6fc" stroke="#222"/><circle cx="8" cy="8" r="4" fill="#49a6d8" stroke="#123"/><circle cx="8" cy="8" r="1.500" fill="#111"/></svg></button>
            <span>▼</span>
            <button aria-label="Sketch"><svg viewBox="0 0 16 16"><path d="M6 9l5-7q5-1 4 4l-6 7z" fill="#d8321e" stroke="#641208"/><path d="M11 2q3 2 1 7" stroke="#ffb24a" fill="none"/><path d="M1 5q4 2 2 5t4 4l3-4" stroke="#222" fill="none"/></svg></button>
        </div>

        <div class="canvas">
            <svg class="wires" viewBox="754 164 579 514" preserveAspectRatio="xMinYMin slice">
                <path class="grid" d="M856 164v514M960 164v514M1064 164v514M1168 164v514M1272 164v514M754 187h579M754 222h579M754 257h579M754 292h579M754 327h579M754 361h579M754 396h579M754 431h579M754 466h579M754 500h579M754 535h579M754 570h579M754 604h579M754 639h579M754 673h579"/>
                <path class="group-red" d="M956.500 298.500h299v212h-299z"/>
                <path class="group-violet" d="M989.500 430.500h58v58h-58z"/>
                <path class="group-purple" d="M1266.500 514.500h65v58h-65zM750 593.500h329v77H750z"/>
                <path class="grid faint" d="M960 298v213M1064 298v213M1168 298v213M957 327h298M957 361h298M957 396h298M957 431h298M957 466h298M957 500h298M856 594v76M960 594v76M1064 594v76M754 604h325M754 639h325"/>
                <path class="select" d="M754 296.500h502v278H754"/>
                <path d="M754 524C830 505 860 476 994 473" fill="none" stroke="#8fc765" stroke-width="1.500" opacity=".8"/>
                <path d="M754 540C950 540 1000 541 1272 541M754 540C950 543 1000 554 1272 554" fill="none" stroke="#93bd74" stroke-width="1.500"/>
                <path d="M754 541C900 544 1100 560 1333 579" fill="none" stroke="#86cc46" stroke-width="2"/>
                <defs>
                    <g id="list">
                        <path d="M759 479C889 479 693 286 823 286"/>
                        <path d="M938 293C998 293 902 366 962 366"/>
                        <path d="M938 293C1038 293 742 434 842 434"/>
                        <path d="M894 426C930 426 925 380 962 380"/>
                        <path d="M894 426C935 426 925 450 880 471S800 522 754 546"/>
                        <path d="M1074 618C1234 618 802 394 962 394"/>
                        <path d="M1011 370C1047 370 1048 327 1084 327"/>
                        <path d="M811 615C820 615 821 609 830 609M878 615C884 615 882 608 888 608M936 615C945 615 947 610 956 610M1004 618C1014 618 1016 611 1026 611M811 648C826 648 815 623 830 623M754 611l8-2M754 615C760 630 754 638 762 641"/>
                    </g>
                    <g id="tree">
                        <path d="M1045 459C1150 459 1180 470 1333 475M1045 459C1150 459 1180 476 1333 487"/>
                        <path d="M1045 459C1075 459 1075 487 1105 487"/>
                        <path d="M1157 480C1214 480 1214 533 1271 533"/>
                        <path d="M1237 385C1357 385 874 445 994 445"/>
                        <path d="M1135 313h9M1328 543h5"/>
                    </g>
                    <g id="live">
                        <path d="M1250 313C1295 313 1290 254 1333 253"/>
                        <path d="M1250 327C1262 327 1258 315 1250 313"/>
                        <path d="M1194 327C1200 327 1195 313 1200 313"/>
                    </g>
                    <g id="dim"><path d="M1240 340C1225 350 1220 348 1202 362S1186 385 1197 385"/></g>
                </defs>
                <path class="single" d="M754 371C768 335 785 303 823 300M754 424C860 432 860 459 994 459M874 293h15M754 622h8M754 655h8M754 662C800 640 830 622 888 623M790 632l40-7M811 645C860 625 900 624 956 624M780 678C880 640 910 626 1026 625"/>
                <use href="#list" class="outer"/><use href="#list" class="inner"/>
                <use href="#tree" class="outer dash"/><use href="#tree" class="inner dash"/>
                <use href="#live" class="outer dash green"/><use href="#live" class="inner dash lime"/>
                <use href="#dim" class="outer dash olive"/><use href="#dim" class="inner dash moss"/>
            </svg>

            <div class="stub"></div>
            <div class="stub low"></div>
            <div class="node hidden-preview del"><ul><li>P</li><li>Pl</li></ul><b>Del</b><ul><li>M</li></ul></div>
            <div class="node face"><ul><li>M</li></ul><b>Face B</b><ul><li>B</li></ul></div>
            <div class="node scale"><ul><li>G</li><li>C</li><li>F</li></ul><b>Scale</b><ul><li>G</li><li>X</li></ul></div>
            <div class="node hidden-preview pcen"><ul><li>P</li></ul><b>PCen</b><ul><li>Cv</li><li>Ce</li></ul></div>
            <div class="node hidden-preview cp"><ul><li>C</li></ul><b>CP</b><ul><li>P</li><li>W</li><li>K</li></ul></div>
            <div class="node hidden-preview shift"><ul><li>L</li><li>S</li><li>W</li></ul><b>Shift</b><ul><li>L</li></ul></div>
            <div class="node selected nurbs"><ul><li>V</li><li>D</li><li>P</li></ul><b>Nurbs</b><ul><li>C</li><li>L</li><li>D</li></ul></div>
            <div class="node geo"><span>Geo</span></div>
            <div class="node mapsrf"><ul><li>C</li><li>S</li><li>T</li></ul><b>Map Srf</b><ul><li>C</li></ul></div>
            <div class="node error pcen2"><ul><li>P</li></ul><b>PCen</b><ul><li>Cv</li><li>Ce</li></ul></div>
            <div class="node hidden-preview srfcp"><ul><li>P</li><li>S</li></ul><b>Srf CP</b><ul><li>P</li><li>uvP</li><li>D</li></ul></div>
            <div class="node dist1"><ul><li>A</li><li>B</li></ul><b>Dist</b><ul><li>D</li></ul></div>
            <div class="node dist2"><ul><li>A</li><li>B</li></ul><b>Dist</b><ul><li>D</li></ul></div>
            <div class="node min1"><ul><li>A</li><li>B</li></ul><b>Min</b><ul><li>R</li></ul></div>
            <div class="node axb"><ul><li>A</li><li>B</li></ul><b>A×B</b><ul><li>R</li></ul></div>
            <div class="node min2"><ul><li>A</li><li>B</li></ul><b>Min</b><ul><li>R</li></ul></div>
            <div class="node max"><ul><li>A</li><li>B</li></ul><b>Max</b><ul><li>R</li></ul></div>

            <svg class="wires" viewBox="754 164 579 514" preserveAspectRatio="xMinYMin slice">
                <use href="#pipe" x="856" y="426" width="16" height="16"/>
                <use href="#pipe" x="1119" y="479" width="16" height="16"/>
                <path d="M1143 461h13v8h-5l-2 3-2-3h-4z" fill="#e5281c"/><path d="M1143 461h13v3h-13z" fill="#f7ecd0"/>
                <g>
                    <use href="#nodekey" x="913" y="285" width="8" height="8"/><use href="#nodekey" x="904" y="293" width="8" height="8"/><use href="#nodekey" x="913" y="293" width="8" height="8"/><use href="#nodekey" x="921" y="293" width="8" height="8"/>
                    <use href="#nodekey" x="1252" y="423" width="8" height="8"/><use href="#nodekey" x="1252" y="432" width="8" height="8"/><use href="#nodekey" x="1252" y="440" width="8" height="8"/><use href="#nodekey" x="1261" y="432" width="8" height="8"/>
                    <use href="#nodekey" x="904" y="571" width="8" height="8"/><use href="#nodekey" x="913" y="571" width="8" height="8"/><use href="#nodekey" x="921" y="571" width="8" height="8"/><use href="#nodekey" x="913" y="579" width="8" height="8"/>
                </g>
            </svg>
        </div>
        <footer class="gh-status">..</footer>
    </section>
</body>
</html>
```
FILE: styles.css
```css
* {
    box-sizing: border-box;
}
body {
    margin: 0;
    height: 100vh;
    overflow: hidden;
    position: relative;
    display: flex;
    flex-direction: column;
    background: #dfe2ea;
    color: #1a1a1a;
    font-family: "Open Sans", "Noto Sans", sans-serif;
    font-size: 8px;
    line-height: 12px;
}
button {
    border: 0;
    padding: 0;
    background: none;
    color: inherit;
    font: inherit;
    white-space: nowrap;
}
svg {
    display: block;
}
.defs {
    position: absolute;
    width: 0;
    height: 0;
}

/* rhino top area */
.titlebar {
    height: 15px;
    flex: none;
    display: flex;
    align-items: center;
    gap: 3px;
    padding-left: 2px;
    background: #fff;
}
.logo {
    width: 11px;
    height: 11px;
}
.window-buttons {
    margin-left: auto;
    display: flex;
    gap: 22px;
    padding-right: 12px;
}
.window-buttons svg {
    width: 10px;
    height: 10px;
    fill: none;
    stroke: #222;
}
.menubar {
    height: 15px;
    flex: none;
    display: flex;
    align-items: center;
    gap: 9px;
    padding-left: 5px;
    background: #fff;
}
.command {
    height: 37px;
    flex: none;
    margin-left: 4px;
    border-top: 2px solid #d9dfe6;
    border-bottom: 2px solid #d9dfe6;
    background: #fff;
    font-family: "Liberation Sans", Arial, sans-serif;
    font-size: 9px;
}
.command p {
    margin: 0;
    height: 20px;
    padding-left: 1px;
    border-bottom: 1px solid #c3c6d0;
}
.prompt {
    display: flex;
    padding-left: 1px;
    font-weight: bold;
    font-size: 8px;
}
.prompt input {
    flex: 1;
    border: 0;
    padding: 0 4px;
    height: 12px;
    font: inherit;
    outline: 0;
}
.tooltabs {
    height: 14px;
    flex: none;
    display: flex;
    align-items: flex-end;
    padding-left: 6px;
    border-bottom: 1px solid #b9c3d8;
    background: #dcdfe8;
    font-family: "Liberation Sans", Arial, sans-serif;
}
.tooltabs button {
    position: relative;
    z-index: 0;
    height: 11px;
    padding: 0 5px;
    line-height: 11px;
}
.tooltabs button::before {
    content: "";
    position: absolute;
    inset: 0;
    z-index: -1;
    border: 1px solid #b3bfd8;
    border-bottom: 0;
    border-radius: 2px 3px 0 0;
    background: #d3daea;
    transform: skewX(-25deg);
}
.tooltabs .active::before {
    background: #fff;
}
.toolbar {
    height: 27px;
    flex: none;
    display: flex;
    align-items: flex-start;
    padding: 2px 0 0 5px;
    background: linear-gradient(#fbfbfc, #dfe2ea);
}
.toolbar.second {
    height: 29px;
    align-items: flex-start;
    border-top: 2px solid #d6dce4;
    border-bottom: 1px solid #aebdd0;
}
.toolbar i {
    width: 1px;
    height: 18px;
    margin: 0 1px;
    background: #c9ccd4;
}
.set {
    display: flex;
    justify-content: space-around;
}
.set svg {
    width: 16px;
    height: 16px;
}
.w2 { width: 39px; }
.w4 { width: 79px; }
.w5 { width: 98px; margin-right: 4px; }
.w6 { width: 118px; }
.w8 { width: 156px; }
.fly {
    position: relative;
}
.fly::after {
    content: "";
    position: absolute;
    right: -1px;
    bottom: -1px;
    border: 2px solid #444;
    border-top-color: transparent;
    border-left-color: transparent;
}

/* side bar and viewport */
.workspace {
    flex: 1;
    min-height: 0;
    display: flex;
}
.sidebar {
    width: 38px;
    flex: none;
    display: flex;
    padding-top: 5px;
    border-right: 1px solid #b8c4d6;
}
.sidetabs {
    width: 13px;
    display: flex;
    flex-direction: column;
    padding-left: 2px;
}
.sidetabs button {
    flex: 1;
    overflow: hidden;
    border: 1px solid #b3bfd8;
    border-right: 1px solid #c3cbdb;
    border-radius: 5px 0 0 3px;
    background: #d4daea;
}
.sidetabs .active, .sidetabs .gear {
    border-color: transparent;
    background: none;
}
.sidetabs svg {
    width: 11px;
    height: 11px;
    margin: 0 auto;
}
.sidetools {
    width: 21px;
}
.sidetools hr {
    margin: 2px 3px;
    border: 0;
    border-top: 1px solid #b4b8c2;
}
.stack {
    display: flex;
    flex-direction: column;
    justify-content: space-around;
    align-items: center;
}
.stack svg {
    width: 16px;
    height: 16px;
}
.s10 { height: 194px; }
.s6 { height: 116px; }
.s7 { height: 137px; }
.views {
    flex: 1;
    min-width: 0;
    display: flex;
    flex-direction: column;
}
.viewport {
    position: relative;
    flex: 1;
    min-height: 0;
    background: #fff;
    border-bottom: 1px solid #b8c4d6;
}
.scene {
    width: 100%;
    height: 100%;
}
.axis {
    font: 9px "Liberation Sans", Arial, sans-serif;
    fill: #555;
}
.viewname {
    position: absolute;
    left: 0;
    top: 0;
    height: 12px;
    padding-left: 6px;
    background: #8ba5c4;
    line-height: 12px;
    display: flex;
    gap: 4px;
}
.viewname span {
    padding: 0 1px;
    border-left: 1px solid #333;
    font-size: 6px;
}
.viewtabs {
    height: 17px;
    flex: none;
    display: flex;
}
.viewtabs button {
    height: 15px;
    padding: 0 3px 0 6px;
    border: 1px solid #b8c4dc;
    border-top: 0;
    border-radius: 0 0 3px 8px;
    background: #d5dbeb;
    line-height: 14px;
}
.viewtabs .active {
    background: #fff;
}

/* bottom bars */
.osnap {
    height: 18px;
    flex: none;
    display: flex;
    align-items: center;
    gap: 3px;
    padding-left: 8px;
    font-family: "Liberation Sans", Arial, sans-serif;
}
.osnap label {
    display: flex;
    align-items: center;
    gap: 3px;
}
.osnap input {
    appearance: none;
    width: 9px;
    height: 9px;
    margin: 0;
    border: 1px solid #444;
    background: #fff;
}
.osnap input:checked::before {
    content: "";
    display: block;
    width: 6px;
    height: 3px;
    margin: 1px 0 0 1px;
    border-left: 1px solid #222;
    border-bottom: 1px solid #222;
    transform: rotate(-45deg);
}
.osnap input:disabled {
    border-color: #bbb;
    background: #d8d8d8;
}
.status {
    height: 14px;
    flex: none;
    display: flex;
    border-top: 1px solid #b4c0d2;
    font-family: "Liberation Sans", Arial, sans-serif;
    font-size: 9px;
}
.status > * {
    border-right: 1px solid #a8b6cc;
    line-height: 14px;
    text-align: center;
    white-space: nowrap;
}
.cplane { width: 40px; }
.coord { width: 61px; }
.layer {
    width: 120px;
    display: flex;
    gap: 2px;
    padding-left: 2px;
}
.layer b {
    width: 10px;
    height: 10px;
    margin-top: 2px;
    background: #000;
}
.gridsnap { width: 53px; }
.ortho { width: 33px; }
.planar { width: 38px; }
.smart { width: 59px; }
.gumball { width: 46px; }
.record { width: 75px; }
.status .on {
    background: #e3f2fb;
    font-weight: bold;
}
.status .memory {
    flex: 1;
    border: 0;
    text-align: left;
}
.taskbar {
    height: 28px;
    flex: none;
    display: flex;
    background: #0b0b0b;
    color: #fff;
}
.start {
    width: 33px;
}
.start svg {
    width: 12px;
    height: 12px;
    margin: auto;
}
.search {
    width: 239px;
    display: flex;
    align-items: center;
    gap: 7px;
    padding: 0 7px;
    background: #f1f1f1;
}
.search svg {
    width: 14px;
    height: 14px;
}
.search input {
    flex: 1;
    min-width: 0;
    border: 0;
    padding: 0;
    background: none;
    font: 10px "Open Sans", "Noto Sans", sans-serif;
}
.search input::placeholder {
    color: #555;
}
.apps {
    display: flex;
    gap: 2px;
}
.apps button {
    width: 32px;
    border-bottom: 2px solid transparent;
}
.apps svg {
    width: 16px;
    height: 16px;
    margin: auto;
}
.apps .open {
    border-color: #6db2e4;
}
.apps .current {
    background: #3c3c3c;
}
.tray {
    margin-left: auto;
    display: flex;
    align-items: center;
    gap: 6px;
    padding-right: 11px;
}
.tray svg {
    width: 13px;
    height: 13px;
    fill: none;
    stroke: #fff;
}
.tray .more {
    align-self: flex-start;
    padding-right: 8px;
    font-size: 12px;
}
.tray .notes {
    width: 18px;
    height: 18px;
}
.notes text {
    font-size: 8px;
    fill: #fff;
    stroke: none;
}
.lang, .clock {
    text-align: center;
}
.lang {
    padding: 0 2px;
}
.clock {
    padding-right: 3px;
}

/* grasshopper window */
.gh {
    position: absolute;
    left: 753px;
    right: 0;
    top: 26px;
    bottom: 55px;
    display: flex;
    flex-direction: column;
    border: 1px solid #8a8a8a;
    border-right: 0;
    background: #f0f0f0;
    box-shadow: 0 1px 6px rgba(0, 0, 0, 0.35);
    overflow: hidden;
}
.gh-title {
    height: 22px;
    flex: none;
    padding-left: 4px;
    background: #fff;
    line-height: 20px;
}
.gh-menu {
    height: 15px;
    flex: none;
    display: flex;
    align-items: flex-start;
    gap: 11px;
    padding-left: 9px;
    background: #f3f3f3;
}
.gh-tabs {
    height: 16px;
    flex: none;
    display: flex;
    align-items: flex-end;
    padding-left: 4px;
    gap: 11px;
    border-bottom: 1px solid #a0a0a0;
    color: #777;
    font-family: "Liberation Sans", Arial, sans-serif;
}
.gh-tabs button {
    height: 14px;
}
.gh-tabs .active {
    height: 16px;
    margin: 0 -7px -1px;
    padding: 0 6px;
    border: 1px solid #a0a0a0;
    border-bottom: 0;
    border-radius: 4px 4px 0 0;
    background: #fff;
    color: #222;
}
.ribbon {
    height: 61px;
    flex: none;
    display: flex;
    align-items: flex-start;
    gap: 2px;
    padding: 2px 1px 0;
    border-bottom: 1px solid #888;
    background: linear-gradient(#d8d8d8, #f0f0f0);
}
.panel {
    border: 1px solid #8f8f8f;
    border-radius: 3px;
    overflow: hidden;
    background: linear-gradient(#d6d6d6, #ececec);
}
.analysis { width: 121px; }
.division { width: 50px; }
.primitive { width: 76px; }
.spline, .util { width: 69px; }
.icons {
    height: 40px;
    display: grid;
    grid-template-columns: repeat(3, 1fr);
    place-items: center;
}
.analysis .icons { grid-template-columns: 20px 20px 32px 22px 25px; }
.division .icons { grid-template-columns: 1fr 1fr; }
.spline .icons, .util .icons { grid-template-columns: 21px 18px 1fr; }
.icons svg {
    width: 15px;
    height: 15px;
}
.k, .r, .g {
    fill: none;
    stroke: #1a1a1a;
    stroke-width: 1.5;
}
.r {
    stroke: #9c1c1c;
}
.g {
    stroke: #777;
    stroke-width: 1;
}
.p {
    fill: #fff;
    stroke: #222;
    stroke-width: 0.8;
}
.panel h2 {
    height: 9px;
    margin: 0;
    position: relative;
    background: #1d1d1d;
    color: #eee;
    font: 8px/9px "Liberation Sans", Arial, sans-serif;
    text-align: center;
}
.panel h2 span {
    position: absolute;
    right: 2px;
    top: 0;
}
.gh-toolbar {
    height: 23px;
    flex: none;
    display: flex;
    align-items: center;
    gap: 4px;
    padding-left: 3px;
    border-bottom: 1px solid #d4d0c8;
    background: linear-gradient(#f4f4f4, #fff);
}
.gh-toolbar svg {
    width: 16px;
    height: 16px;
}
.gh-toolbar i {
    width: 1px;
    height: 14px;
    background: #ccc;
}
.gh-toolbar span {
    font-size: 6px;
}
.gh-toolbar .zoom {
    position: relative;
    width: 48px;
}
.zoom select {
    display: block;
    width: 100%;
    height: 17px;
    appearance: none;
    padding: 0 2px;
    border: 1px solid #888;
    border-radius: 0;
    background: #fff;
    font: 9px "Open Sans", "Noto Sans", sans-serif;
}
.gh-toolbar .zoom svg {
    position: absolute;
    right: 2px;
    top: 5px;
    width: 8px;
    height: 8px;
    pointer-events: none;
}
.canvas {
    flex: 1;
    min-height: 0;
    position: relative;
    overflow: hidden;
    background: #d4d0c8;
    font-family: "Noto Sans", "Open Sans", sans-serif;
}
.wires {
    position: absolute;
    inset: 0;
    width: 100%;
    height: 100%;
    pointer-events: none;
}
.grid {
    stroke: #c5c0b8;
}
.grid.faint {
    stroke: rgba(0, 0, 0, 0.07);
}
.group-red { fill: #ee8783; stroke: #c87874; }
.group-violet { fill: #c488cf; stroke: #a878b4; }
.group-purple { fill: #bba3ea; stroke: #a390c8; }
.select {
    fill: none;
    stroke: #8a8680;
    stroke-dasharray: 2 1;
}
.single, .outer, .inner {
    fill: none;
}
.single { stroke: rgba(50, 50, 50, 0.75); stroke-width: 2; }
.outer { stroke: #5c5a59; stroke-width: 4; }
.inner { stroke: #95928f; stroke-width: 1.5; }
.dash { stroke-dasharray: 8 3; }
.outer.dash { stroke: #4c3f3d; }
.inner.dash { stroke: #9c8a86; }
.outer.green { stroke: #8cc063; }
.inner.lime { stroke: #bfd0ae; }
.outer.olive { stroke: #9c8758; }
.inner.moss { stroke: #cf9272; }

.node {
    position: absolute;
    width: 47px;
    height: 31px;
    display: flex;
    padding: 1px;
    border: 1px solid #555;
    border-radius: 3px;
    background: linear-gradient(#f4f4f4, #b9b9b9);
    line-height: 11px;
}
.node ul {
    flex: 1;
    margin: 0;
    padding: 0;
    list-style: none;
    display: flex;
    flex-direction: column;
    justify-content: space-around;
    text-align: center;
}
.node li {
    position: relative;
}
.node li::before, .geo::before, .geo::after {
    content: "";
    position: absolute;
    left: -5px;
    top: 3px;
    width: 5px;
    height: 5px;
    border: 1px solid #111;
    border-radius: 50%;
    background: #fff;
}
.node ul:last-child li::before, .geo::after {
    left: auto;
    right: -5px;
}
.node b {
    width: 17px;
    border: 1px solid #222;
    border-radius: 3px;
    background: linear-gradient(#3c3c3c, #333 75%, #777);
    color: #fff;
    font-size: 9px;
    line-height: 15px;
    text-align: center;
    white-space: nowrap;
    writing-mode: vertical-rl;
    transform: rotate(180deg);
}
.hidden-preview {
    background: linear-gradient(#b4b5c4, #8b8c9d);
}
.selected {
    background: linear-gradient(#c0f582, #86e324 30%, #74d416);
}
.selected b {
    background: #1f4d22;
    color: #d6f5c8;
}
.error {
    background: linear-gradient(#f06a60, #d80f0f 25%, #c00808);
}
.del { left: 70px; top: 114px; width: 49px; }
.face { left: 136px; top: 112px; height: 36px; }
.scale { left: 209px; top: 194px; height: 45px; }
.pcen { left: 89px; top: 254px; width: 50px; height: 33px; }
.cp { left: 331px; top: 141px; width: 48px; height: 45px; }
.shift { left: 392px; top: 141px; height: 45px; }
.nurbs { left: 447px; top: 141px; height: 45px; }
.geo { left: 445px; top: 214px; width: 36px; height: 15px; justify-content: center; }
.mapsrf { left: 241px; top: 273px; height: 45px; }
.pcen2 { left: 352px; top: 307px; width: 50px; height: 33px; }
.srfcp { left: 518px; top: 357px; width: 53px; height: 45px; }
.dist1 { left: 9px; top: 436px; }
.dist2 { left: 9px; top: 469px; }
.min1 { left: 77px; top: 436px; }
.axb { left: 135px; top: 436px; }
.min2 { left: 203px; top: 438px; }
.max { left: 273px; top: 439px; }
.stub {
    position: absolute;
    left: -4px;
    top: 286px;
    width: 8px;
    height: 58px;
    border: 1px solid #555;
    border-radius: 3px;
    background: #a0a1b0;
}
.stub.low {
    top: 494px;
    width: 9px;
    height: 20px;
    background: #777;
}
.gh-status {
    height: 16px;
    flex: none;
    padding-left: 3px;
    background: #f3f3f3;
    color: #777;
}
```
